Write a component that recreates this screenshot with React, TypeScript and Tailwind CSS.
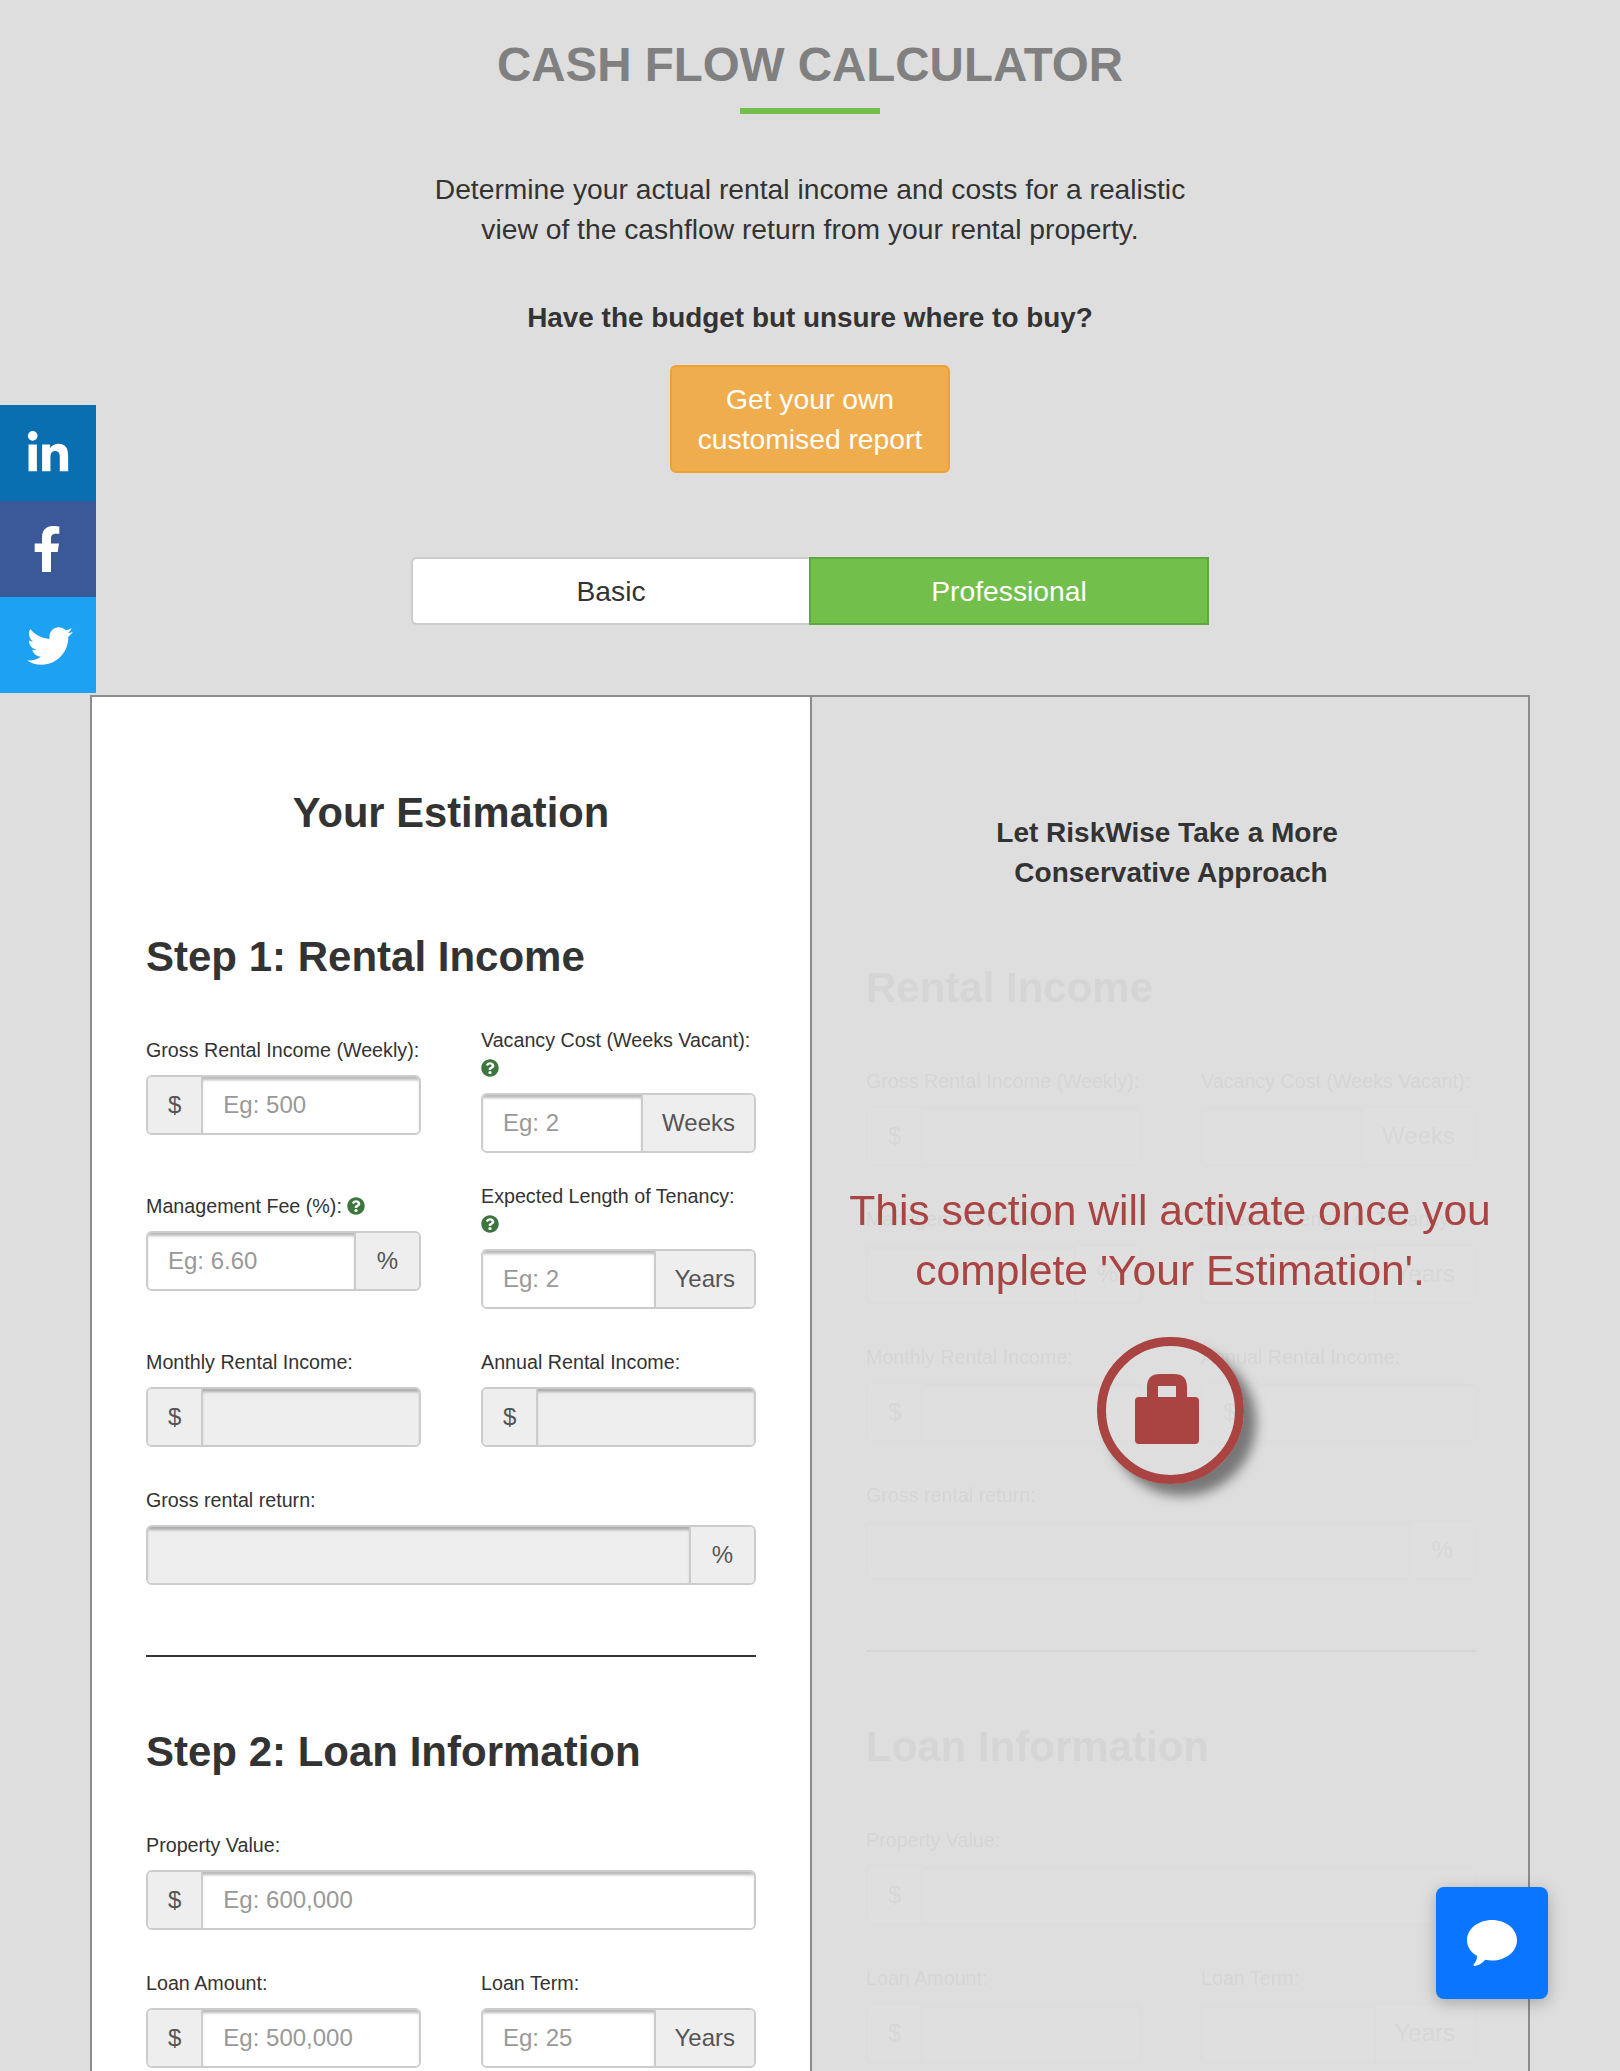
import type { ReactNode } from 'react';
import { FaFacebookF, FaLinkedinIn, FaQuestionCircle, FaTwitter } from 'react-icons/fa';

type FieldProps = {
  label: string;
  help?: boolean;
  before?: string;
  after?: string;
  placeholder?: string;
  disabled?: boolean;
  className?: string;
};

function Addon({ children, side }: { children: ReactNode; side: 'before' | 'after' }) {
  return (
    <span
      className={`flex shrink-0 items-center justify-center bg-[#eeeeee] text-[24px] text-[#555555] border-[#cccccc] ${
        side === 'before' ? 'border-r-2 px-[20px]' : 'min-w-[65px] border-l-2 px-[19px]'
      }`}
    >
      {children}
    </span>
  );
}

function Field({ label, help, before, after, placeholder, disabled, className = '' }: FieldProps) {
  return (
    <div className={className}>
      <label className="block text-[19.7px] leading-[28px] text-[#333333]">
        {label}
        {help && (
          <>
            {' '}
            <FaQuestionCircle className="inline-block align-[-2px] text-[18px] text-[#3c763d]" />
          </>
        )}
      </label>
      <div className="mt-[11px] flex h-[60px] overflow-hidden rounded-[6px] border-2 border-[#cccccc]">
        {before && <Addon side="before">{before}</Addon>}
        <input
          disabled={disabled}
          placeholder={placeholder}
          className={`w-full min-w-0 px-[20px] text-[24px] text-[#555555] shadow-[inset_0_4px_3px_-1px_rgba(0,0,0,0.28)] outline-none placeholder:text-[#999999] ${
            disabled ? 'bg-[#eeeeee]' : 'bg-white'
          }`}
        />
        {after && <Addon side="after">{after}</Addon>}
      </div>
    </div>
  );
}

function Row({ children, className = '' }: { children: ReactNode; className?: string }) {
  return <div className={`grid grid-cols-[275px_275px] gap-x-[60px] ${className}`}>{children}</div>;
}

function SectionTitle({ children, className = '' }: { children: ReactNode; className?: string }) {
  return <h2 className={`text-[42px] font-bold leading-[50px] text-[#333333] ${className}`}>{children}</h2>;
}

function Estimation() {
  return (
    <div className="border-r-2 border-[#8c8c8c] bg-white pl-[54px] pr-[54px] pt-[91px]">
      <h2 className="text-center text-[41.7px] font-bold leading-[50px] text-[#333333]">Your Estimation</h2>
      <SectionTitle className="mt-[94px]">Step 1: Rental Income</SectionTitle>
      <Row className="mt-[44px]">
        <Field className="mt-[10px]" label="Gross Rental Income (Weekly):" before="$" placeholder="Eg: 500" />
        <Field label="Vacancy Cost (Weeks Vacant):" help after="Weeks" placeholder="Eg: 2" />
      </Row>
      <Row className="mt-[29px]">
        <Field className="mt-[10px]" label="Management Fee (%):" help after="%" placeholder="Eg: 6.60" />
        <Field label="Expected Length of Tenancy:" help after="Years" placeholder="Eg: 2" />
      </Row>
      <Row className="mt-[39px]">
        <Field label="Monthly Rental Income:" before="$" disabled />
        <Field label="Annual Rental Income:" before="$" disabled />
      </Row>
      <Field className="mt-[39px]" label="Gross rental return:" after="%" disabled />
      <hr className="mt-[70px] border-t-2 border-[#333333]" />
      <SectionTitle className="mt-[70px]">Step 2: Loan Information</SectionTitle>
      <Field className="mt-[54px]" label="Property Value:" before="$" placeholder="Eg: 600,000" />
      <Row className="mt-[39px]">
        <Field label="Loan Amount:" before="$" placeholder="Eg: 500,000" />
        <Field label="Loan Term:" after="Years" placeholder="Eg: 25" />
      </Row>
    </div>
  );
}

function Conservative() {
  return (
    <div className="relative pl-[54px] pr-[52px] pt-[116px]">
      <h3 className="text-center text-[28px] font-bold leading-[40px] text-[#333333]">
        Let RiskWise Take a More&nbsp;
        <br />
        Conservative Approach
      </h3>

      {/* locked content, barely visible under the notice */}
      <div className="opacity-[0.05]">
        <SectionTitle className="mt-[70px]">Rental Income</SectionTitle>
        <Row className="mt-[54px]">
          <Field label="Gross Rental Income (Weekly):" before="$" />
          <Field label="Vacancy Cost (Weeks Vacant):" after="Weeks" />
        </Row>
        <Row className="mt-[39px]">
          <Field label="Management Fee (%):" after="%" />
          <Field label="Expected Length of Tenancy:" after="Years" />
        </Row>
        <Row className="mt-[39px]">
          <Field label="Monthly Rental Income:" before="$" />
          <Field label="Annual Rental Income:" before="$" />
        </Row>
        <Field className="mt-[39px]" label="Gross rental return:" after="%" />
        <hr className="mt-[70px] border-t-2 border-[#333333]" />
        <SectionTitle className="mt-[70px]">Loan Information</SectionTitle>
        <Field className="mt-[54px]" label="Property Value:" before="$" />
        <Row className="mt-[39px]">
          <Field label="Loan Amount:" before="$" />
          <Field label="Loan Term:" after="Years" />
        </Row>
      </div>

      <div className="absolute inset-x-0 top-[483px] flex flex-col items-center">
        <p className="text-center text-[42.6px] leading-[60px] text-[#a94442]">
          This section will activate once you
          <br />
          complete 'Your Estimation'.
        </p>
        <div className="mt-[37px] flex h-[147px] w-[147px] items-center justify-center rounded-full border-[9px] border-[#a94442] shadow-[12px_12px_12px_#777777]">
          <svg viewBox="0 0 64 70" className="mb-[4px] mr-[7px] h-[70px] w-[64px] fill-[#a94442]">
            <rect x="0" y="23" width="64" height="47" rx="4" />
            <path d="M12 24V13Q12 0 25 0H39Q52 0 52 13V24H41V12H23V24Z" />
          </svg>
        </div>
      </div>
    </div>
  );
}

export default function App() {
  return (
    <div className="relative h-[2071px] overflow-hidden bg-[#dedede] font-['Liberation_Sans',Arial,sans-serif]">
      <div className="pt-[39px] text-center">
        <h1 className="text-[47.5px] font-bold leading-[52px] text-[#808080]">CASH FLOW CALCULATOR</h1>
        <div className="mx-auto mt-[17px] h-[6px] w-[140px] bg-[#72bf4c]" />
        <p className="mt-[55px] text-[28.25px] leading-[40px] text-[#333333]">
          Determine your actual rental income and costs for a realistic
          <br />
          view of the cashflow return from your rental property.
        </p>
        <p className="mt-[49px] text-[27.9px] font-bold leading-[40px] text-[#333333]">
          Have the budget but unsure where to buy?
        </p>
        <button className="mt-[27px] w-[280px] rounded-[6px] border-2 border-[#eea236] bg-[#f0ad4e] pb-[12px] pt-[12px] text-[28.25px] leading-[40px] text-white">
          Get your own
          <br />
          customised report
        </button>
      </div>

      <div className="mx-auto mt-[84px] flex h-[68px] w-[798px] text-[28.25px]">
        <button className="flex-1 rounded-l-[6px] border-2 border-r-0 border-[#cccccc] bg-white text-[#333333]">
          Basic
        </button>
        <button className="flex-1 border-2 border-[#5fa83d] bg-[#72bf4c] text-white">Professional</button>
      </div>

      <div className="mx-[90px] mt-[70px] grid h-[1500px] grid-cols-[720px_1fr] border-2 border-[#8c8c8c]">
        <Estimation />
        <Conservative />
      </div>

      <div className="absolute left-0 top-[405px] w-[96px]">
        <a className="flex h-[96px] items-center justify-center bg-[#0a6fb0] text-white">
          <FaLinkedinIn className="mt-[2px] text-[46px]" />
        </a>
        <a className="flex h-[96px] items-center justify-center bg-[#3b5998] text-white">
          <FaFacebookF className="mr-[2px] text-[46px]" />
        </a>
        <a className="flex h-[96px] items-center justify-center bg-[#1da1f2] text-white">
          <FaTwitter className="ml-[3px] mt-[2px] text-[46px]" />
        </a>
      </div>

      <button className="absolute left-[1436px] top-[1887px] flex h-[112px] w-[112px] items-center justify-center rounded-[8px] bg-[#0a75ff] shadow-[0_4px_16px_rgba(0,0,0,0.25)]">
        <svg viewBox="0 0 50 46" className="h-[46px] w-[50px] fill-white">
          <path d="M25 0C38.8 0 50 8.9 50 20.2C50 31.5 38.8 40.5 25 40.5C22.6 40.5 20.3 40.2 18.1 39.7C15.6 42.8 11.4 45.6 7.6 46C6.4 46.1 6 45 6.8 44.2C8.9 42 10.3 38.8 10.1 36C3.9 32.4 0 26.7 0 20.2C0 8.9 11.2 0 25 0Z" />
        </svg>
      </button>
    </div>
  );
}
